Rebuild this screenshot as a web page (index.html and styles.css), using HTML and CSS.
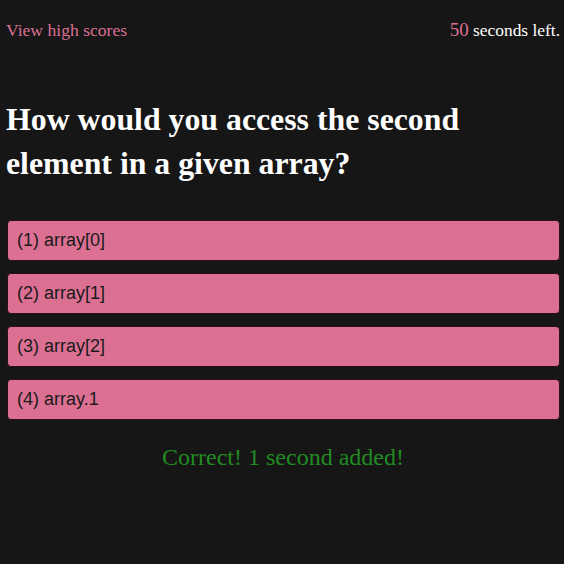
FILE: index.html
```html
<!DOCTYPE html>
<html>
<head>
<meta charset="utf-8">
<link rel="stylesheet" href="styles.css">
</head>
<body>
<header class="topbar">
  <a class="scores" href="#">View high scores</a>
  <div class="timer"><span class="secs">50</span> seconds left.</div>
</header>
<main class="quiz">
  <h1 class="question">How would you access the second element in a given array?</h1>
  <div class="answers">
    <button class="answer">(1) array[0]</button>
    <button class="answer">(2) array[1]</button>
    <button class="answer">(3) array[2]</button>
    <button class="answer">(4) array.1</button>
  </div>
  <p class="feedback">Correct! 1 second added!</p>
</main>
</body>
</html>
```
FILE: styles.css
```css
html, body {
  margin: 0;
  padding: 0;
  background: #161616;
  font-family: "Liberation Serif", "Times New Roman", serif;
  color: #fff;
}
body {
  padding: 0 4px 0 6px;
}
.topbar {
  display: flex;
  justify-content: space-between;
  align-items: baseline;
  padding-top: 19px;
  font-size: 17.6px;
}
.scores {
  color: #db7093;
  text-decoration: none;
}
.timer {
  color: #fff;
  font-size: 17.4px;
}
.secs {
  color: #db7093;
  font-size: 19px;
}
.quiz {
  padding-top: 57px;
}
.question {
  margin: 0;
  font-size: 31.8px;
  line-height: 44px;
  font-weight: bold;
  color: #fff;
}
.answers {
  display: flex;
  flex-direction: column;
  gap: 12px;
  margin-top: 34px;
  padding-left: 1px;
}
.answer {
  display: block;
  width: 100%;
  height: 41px;
  text-align: left;
  padding: 0 9px;
  background: #db7093;
  border: 1px solid #2a1018;
  border-radius: 4px;
  font-family: "Liberation Sans", Arial, sans-serif;
  font-size: 18px;
  color: #1a1a1a;
}
.feedback {
  margin: 24px 0 0;
  text-align: center;
  color: #228b22;
  font-size: 24px;
}
```
